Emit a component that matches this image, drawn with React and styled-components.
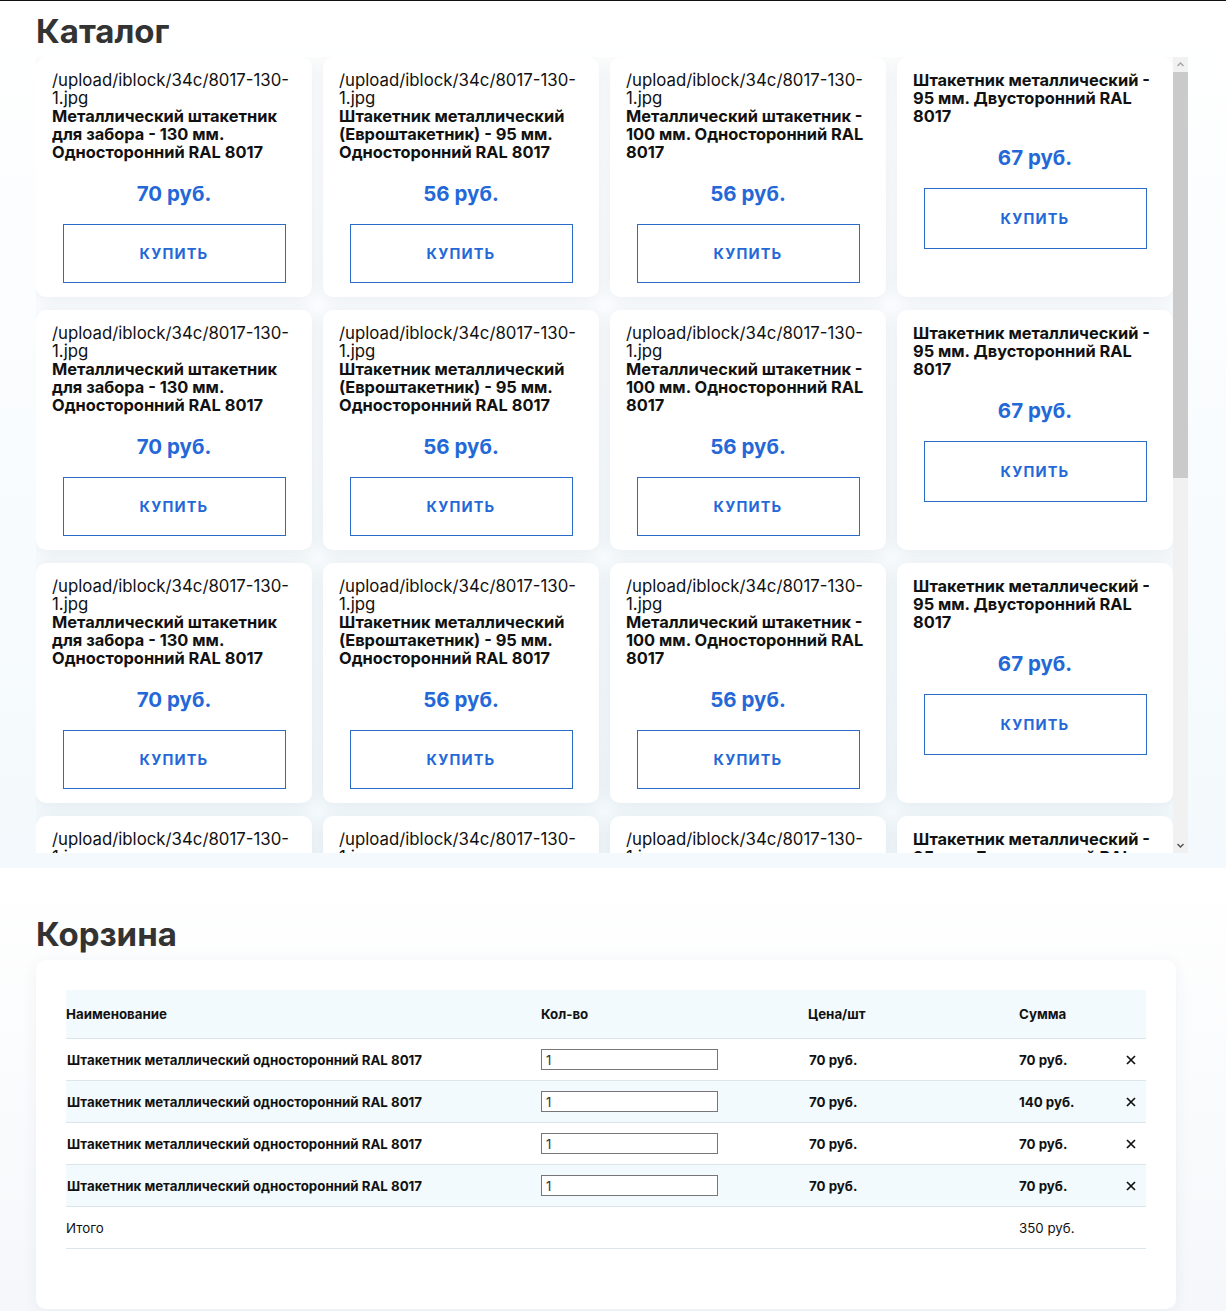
import React from "react";
import styled, { createGlobalStyle } from "styled-components";

const GlobalStyle = createGlobalStyle`
  body {
    margin: 0;
    font-family: Inter, "Noto Sans", sans-serif;
    color: #111;
    background: #fff;
  }
`;

const Page = styled.div`
  border-top: 1px solid #111;
`;

const CatalogSection = styled.section`
  padding: 10px 0 15px;
  background: linear-gradient(180deg, #ffffff 0%, #f3f9fc 100%);
`;

const CartSection = styled.section`
  padding: 46px 0 2px;
  background: linear-gradient(180deg, #ffffff 0%, #f5f7fa 100%);
`;

const Title = styled.h2`
  margin: 0 0 6px 36px;
  font-size: 33px;
  line-height: 40px;
  font-weight: 700;
  color: #333;
`;

const ScrollFrame = styled.div`
  position: relative;
  width: 1152px;
  height: 796px;
  margin-left: 36px;
`;

const Scroller = styled.div`
  height: 100%;
  overflow-y: scroll;
  scrollbar-width: none;
  &::-webkit-scrollbar {
    display: none;
  }
`;

/* drawn scrollbar, the headless browser hides the native one */
const Track = styled.div`
  position: absolute;
  top: 0;
  right: 0;
  bottom: 0;
  width: 15px;
  background: #f1f1f1;
  display: flex;
  flex-direction: column;
`;

const Arrow = styled.div`
  height: 15px;
  display: flex;
  align-items: center;
  justify-content: center;
`;

const Thumb = styled.div`
  height: 406px;
  background: #cacaca;
`;

const TrackRest = styled.div`
  flex: 1;
`;

const Grid = styled.div`
  display: grid;
  grid-template-columns: repeat(4, 276px);
  column-gap: 11px;
  row-gap: 13px;
`;

const Card = styled.div`
  height: 240px;
  box-sizing: border-box;
  padding: 14px 16px;
  background: #fff;
  border-radius: 10px;
  box-shadow: 0 2px 16px rgba(40, 70, 100, 0.09);
  display: flex;
  flex-direction: column;
`;

const Path = styled.div`
  font-size: 16.8px;
  line-height: 18px;
  font-weight: 400;
`;

const Name = styled.div`
  font-size: 16.4px;
  line-height: 18px;
  font-weight: 700;
`;

const Price = styled.div`
  margin-top: 21px;
  text-align: center;
  font-size: 20.5px;
  line-height: 24px;
  font-weight: 700;
  color: #2468d8;
`;

const BuyButton = styled.button`
  display: block;
  width: 223px;
  height: 61px;
  margin: 18px auto 0;
  background: #fff;
  border: 1px solid #2a6cc8;
  color: #2468d8;
  font-family: inherit;
  font-size: 14.5px;
  font-weight: 700;
  letter-spacing: 1.2px;
  cursor: pointer;
`;

const CartCard = styled.div`
  width: 1140px;
  margin-left: 36px;
  box-sizing: border-box;
  padding: 30px 30px 60px;
  background: #fff;
  border-radius: 10px;
  box-shadow: 0 2px 16px rgba(40, 70, 100, 0.06);
`;

const Row = styled.div`
  display: grid;
  grid-template-columns: 475px 267px 211px 1fr 30px;
  align-items: center;
  box-sizing: border-box;
  height: ${(props) => (props.head ? "49px" : "42px")};
  padding-bottom: ${(props) => (props.head ? "1px" : "0")};
  background: ${(props) => (props.shaded ? "#f2fafd" : "#fff")};
  border-bottom: 1px solid #dbe6ec;
  font-size: 13.3px;
  font-weight: ${(props) => (props.plain ? 400 : 700)};
  color: #111;
`;

const Cell = styled.div`
  padding-left: ${(props) => (props.inset ? "1px" : "0")};
`;

const QtyInput = styled.input`
  display: block;
  width: 177px;
  height: 21px;
  box-sizing: border-box;
  border: 1px solid #767676;
  padding: 0 4px;
  font-family: inherit;
  font-size: 13px;
  color: #333;
`;

const Remove = styled.button`
  border: none;
  background: none;
  padding: 0;
  width: 30px;
  height: 20px;
  display: flex;
  align-items: center;
  justify-content: center;
  cursor: pointer;
`;

const products = [
  {
    path: "/upload/iblock/34c/8017-130-1.jpg",
    name: "Металлический штакетник для забора - 130 мм. Односторонний RAL 8017",
    price: 70,
  },
  {
    path: "/upload/iblock/34c/8017-130-1.jpg",
    name: "Штакетник металлический (Евроштакетник) - 95 мм. Односторонний RAL 8017",
    price: 56,
  },
  {
    path: "/upload/iblock/34c/8017-130-1.jpg",
    name: "Металлический штакетник - 100 мм. Односторонний RAL 8017",
    price: 56,
  },
  {
    path: "",
    name: "Штакетник металлический - 95 мм. Двусторонний RAL 8017",
    price: 67,
  },
];

const cartItems = [
  { qty: 1, price: 70, sum: 70 },
  { qty: 1, price: 70, sum: 140 },
  { qty: 1, price: 70, sum: 70 },
  { qty: 1, price: 70, sum: 70 },
];

function CloseIcon() {
  return (
    <svg width="10" height="10" viewBox="0 0 10 10">
      <path d="M1 1 L9 9 M9 1 L1 9" stroke="#111" strokeWidth="1.7" />
    </svg>
  );
}

function Chevron({ up, color }) {
  return (
    <svg width="7" height="5" viewBox="0 0 7 5">
      <path
        d={up ? "M0.5 4 L3.5 1 L6.5 4" : "M0.5 1 L3.5 4 L6.5 1"}
        fill="none"
        stroke={color}
        strokeWidth="1.4"
      />
    </svg>
  );
}

export default function App() {
  const rows = [0, 1, 2, 3, 4, 5];
  return (
    <Page>
      <GlobalStyle />
      <CatalogSection>
        <Title>Каталог</Title>
        <ScrollFrame>
          <Scroller>
            <Grid>
              {rows.map((r) =>
                products.map((p, i) => (
                  <Card key={`${r}-${i}`}>
                    {p.path && <Path>{p.path.replace("130-", "130-\u200b")}</Path>}
                    <Name>{p.name}</Name>
                    <Price>{`${p.price} руб.`}</Price>
                    <BuyButton>КУПИТЬ</BuyButton>
                  </Card>
                ))
              )}
            </Grid>
          </Scroller>
          <Track>
            <Arrow>
              <Chevron up color="#a3a3a3" />
            </Arrow>
            <Thumb />
            <TrackRest />
            <Arrow>
              <Chevron color="#505050" />
            </Arrow>
          </Track>
        </ScrollFrame>
      </CatalogSection>
      <CartSection>
        <Title>Корзина</Title>
        <CartCard>
          <Row head shaded>
            <Cell>Наименование</Cell>
            <Cell>Кол-во</Cell>
            <Cell>Цена/шт</Cell>
            <Cell>Сумма</Cell>
            <Cell />
          </Row>
          {cartItems.map((item, i) => (
            <Row key={i} shaded={i % 2 === 1}>
              <Cell inset>Штакетник металлический односторонний RAL 8017</Cell>
              <Cell>
                <QtyInput defaultValue={item.qty} />
              </Cell>
              <Cell inset>{`${item.price} руб.`}</Cell>
              <Cell>{`${item.sum} руб.`}</Cell>
              <Cell>
                <Remove>
                  <CloseIcon />
                </Remove>
              </Cell>
            </Row>
          ))}
          <Row plain>
            <Cell>Итого</Cell>
            <Cell />
            <Cell />
            <Cell>350 руб.</Cell>
            <Cell />
          </Row>
        </CartCard>
      </CartSection>
    </Page>
  );
}
